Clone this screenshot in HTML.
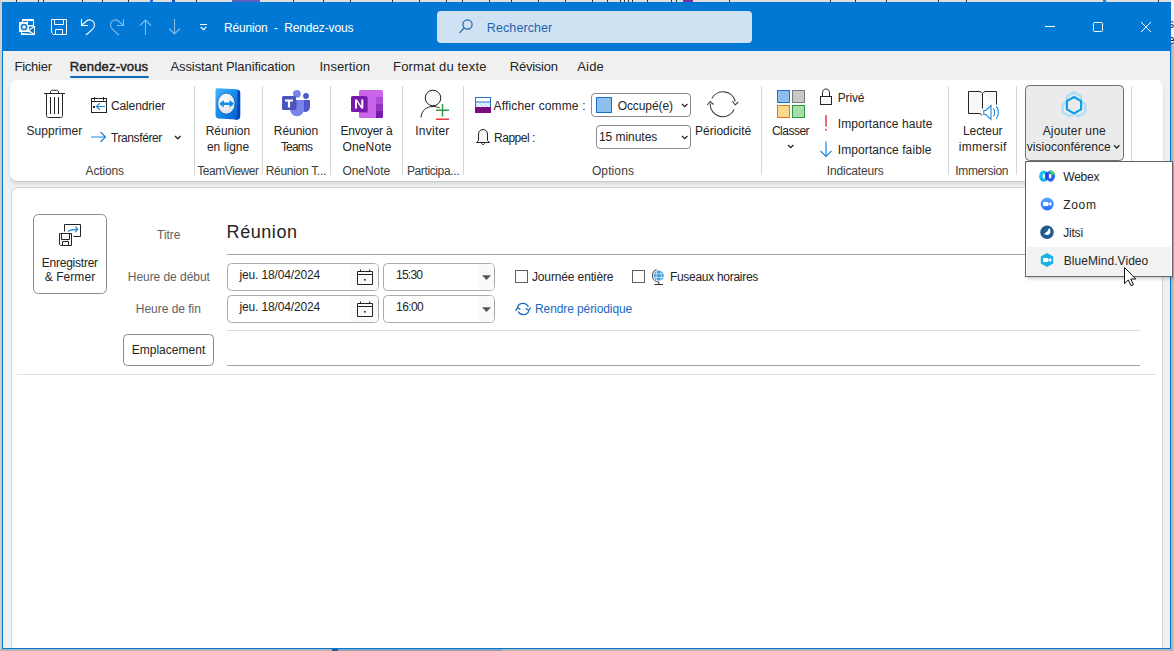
<!DOCTYPE html>
<html><head><meta charset="utf-8">
<style>
*{margin:0;padding:0;box-sizing:border-box}
html,body{width:1174px;height:651px;overflow:hidden;background:#c9c9c9;font-family:"Liberation Sans",sans-serif;color:#242424}
.a{position:absolute}
.t{position:absolute;white-space:nowrap;font-size:12px;line-height:14px}
svg.a{overflow:visible}
</style></head>
<body>
<div class="a" style="left:0;top:0;width:1174px;height:2px;background:#dedede"></div>
<div class="a" style="left:16px;top:0;width:1px;height:2px;background:#3a3a3a"></div><div class="a" style="left:38px;top:0;width:1px;height:2px;background:#3a3a3a"></div><div class="a" style="left:43px;top:0;width:1px;height:2px;background:#3a3a3a"></div><div class="a" style="left:82px;top:0;width:1px;height:2px;background:#3a3a3a"></div><div class="a" style="left:102px;top:0;width:1px;height:2px;background:#3a3a3a"></div><div class="a" style="left:128px;top:0;width:1px;height:2px;background:#3a3a3a"></div><div class="a" style="left:196px;top:0;width:1px;height:2px;background:#3a3a3a"></div><div class="a" style="left:293px;top:0;width:1px;height:2px;background:#3a3a3a"></div><div class="a" style="left:323px;top:0;width:1px;height:2px;background:#3a3a3a"></div><div class="a" style="left:350px;top:0;width:1px;height:2px;background:#3a3a3a"></div><div class="a" style="left:392px;top:0;width:1px;height:2px;background:#3a3a3a"></div><div class="a" style="left:419px;top:0;width:1px;height:2px;background:#3a3a3a"></div><div class="a" style="left:446px;top:0;width:1px;height:2px;background:#3a3a3a"></div><div class="a" style="left:462px;top:0;width:1px;height:2px;background:#3a3a3a"></div><div class="a" style="left:489px;top:0;width:1px;height:2px;background:#3a3a3a"></div><div class="a" style="left:511px;top:0;width:1px;height:2px;background:#3a3a3a"></div><div class="a" style="left:538px;top:0;width:1px;height:2px;background:#3a3a3a"></div><div class="a" style="left:565px;top:0;width:1px;height:2px;background:#3a3a3a"></div><div class="a" style="left:592px;top:0;width:1px;height:2px;background:#3a3a3a"></div><div class="a" style="left:607px;top:0;width:1px;height:2px;background:#3a3a3a"></div><div class="a" style="left:620px;top:0;width:1px;height:2px;background:#3a3a3a"></div><div class="a" style="left:624px;top:0;width:1px;height:2px;background:#3a3a3a"></div><div class="a" style="left:628px;top:0;width:1px;height:2px;background:#3a3a3a"></div><div class="a" style="left:632px;top:0;width:1px;height:2px;background:#3a3a3a"></div><div class="a" style="left:647px;top:0;width:1px;height:2px;background:#3a3a3a"></div><div class="a" style="left:671px;top:0;width:1px;height:2px;background:#3a3a3a"></div><div class="a" style="left:676px;top:0;width:1px;height:2px;background:#3a3a3a"></div><div class="a" style="left:729px;top:0;width:1px;height:2px;background:#3a3a3a"></div><div class="a" style="left:830px;top:0;width:1px;height:2px;background:#3a3a3a"></div><div class="a" style="left:855px;top:0;width:1px;height:2px;background:#3a3a3a"></div><div class="a" style="left:886px;top:0;width:1px;height:2px;background:#3a3a3a"></div><div class="a" style="left:938px;top:0;width:1px;height:2px;background:#3a3a3a"></div><div class="a" style="left:966px;top:0;width:1px;height:2px;background:#3a3a3a"></div><div class="a" style="left:1158px;top:0;width:1px;height:2px;background:#3a3a3a"></div><div class="a" style="left:232px;top:0;width:28px;height:2px;background:#5a5fc0"></div><div class="a" style="left:150px;top:0;width:3px;height:2px;background:#2a6fd0"></div><div class="a" style="left:172px;top:0;width:3px;height:2px;background:#1a50c0"></div><div class="a" style="left:683px;top:0;width:10px;height:2px;background:#8030a0"></div><div class="a" style="left:1103px;top:0;width:3px;height:2px;background:#3080e0"></div>
<div class="a" style="left:1171px;top:0;width:3px;height:651px;background:linear-gradient(90deg,#a9a9a9,#c6c6c6)"></div>
<div class="a" style="left:1171px;top:0;width:3px;height:44px;background:#f2f2f2"></div>
<div class="t" style="left:1168px;top:17px;font-size:12px;color:#222">s</div>
<div class="t" style="left:1168px;top:33px;font-size:12px;color:#222">e</div>
<div class="a" style="left:0;top:0;width:2px;height:651px;background:#cfcfcf"></div>
<div class="a" style="left:2px;top:2px;width:1169px;height:647px;background:#f0f0f0"></div>
<div class="a" style="left:2px;top:2px;width:1169px;height:49px;background:#0078d4"></div>
<!-- ribbon card -->
<div class="a" style="left:10px;top:80px;width:1153px;height:101px;background:#fff;border-radius:7px;box-shadow:0 1px 0 #cdcdcd,0 3px 4px rgba(0,0,0,0.09)"></div>
<!-- body card -->
<div class="a" style="left:11px;top:187px;width:1152px;height:462px;background:#fff;border:1px solid #d4d4d4;border-bottom:none;border-radius:7px 7px 0 0"></div>
<!-- window border -->
<div class="a" style="left:2px;top:2px;width:1169px;height:647px;border:1px solid #0078d4"></div>
<div class="a" style="left:0;top:649px;width:1174px;height:2px;background:#b4b4b4"></div>
<div class="a" style="left:338px;top:649px;width:164px;height:2px;background:#8ea3b8"></div>
<div class="a" style="left:332px;top:649px;width:6px;height:2px;background:#1f5fa0"></div>
<svg class="a" style="left:0;top:0" width="1174" height="651" viewBox="0 0 1174 651">
<!-- ===== title bar ===== -->
<g fill="#fff">
  <rect x="22" y="19" width="12" height="8"/>
  <rect x="21" y="26" width="14" height="9"/>
  <rect x="19" y="22" width="10" height="10"/>
</g>
<g fill="#0078d4">
  <rect x="23" y="21" width="4" height="1"/>
  <rect x="28" y="21" width="5" height="4"/>
  <path d="M22,33 V32 H28.5 L33,34 Z"/>
  <path d="M29,26.5 H33.5 L29,29.5 Z"/>
  <path d="M29.5,30.6 L34,27.6 V33.6 Z"/>
</g>
<circle cx="24" cy="27" r="2.6" fill="none" stroke="#0078d4" stroke-width="1.5"/>
<g fill="none" stroke="#fff" stroke-width="1">
  <path d="M51.5,19.5 H66.5 V34.5 H53.5 L51.5,32.5 Z M54.5,19.5 V24.5 H63.5 V19.5 M55.5,34.5 V29.5 H62.5 V34.5"/>
  <path d="M81.5,19 V25.5 H88 M82,25 L86.5,21 C89.5,18.5 94.5,20.5 94.5,25 C94.5,27 93.5,28.3 92.5,29.3 L86,35" stroke-width="1.1"/>
</g>
<g fill="none" stroke="#fff" stroke-opacity="0.5" stroke-width="1.1">
  <path d="M123.5,19 V25.5 H117 M123,25 L118.5,21 C115.5,18.5 110.5,20.5 110.5,25 C110.5,27 111.5,28.3 112.5,29.3 L119,35"/>
  <path d="M145.5,20 V35 M140,25.5 L145.5,20 L151,25.5"/>
  <path d="M174.5,19 V34 M169,28.5 L174.5,34 L180,28.5"/>
</g>
<g fill="none" stroke="#fff" stroke-width="1.2">
  <path d="M200,24.5 H207 M200.8,27 L203.5,29.7 L206.2,27"/>
</g>
<rect x="437" y="11" width="315" height="32" rx="4" fill="#cfe2f3"/>
<g fill="none" stroke="#1f62ad" stroke-width="1.2">
  <circle cx="467.5" cy="24.5" r="4.6"/>
  <path d="M464.3,27.8 L459.5,32.8"/>
</g>
<g fill="none" stroke="#fff" stroke-width="1">
  <path d="M1045,26.5 H1055"/>
  <rect x="1093.5" y="22.5" width="9" height="9" rx="1"/>
  <path d="M1141,22 L1151,32 M1151,22 L1141,32"/>
</g>
<!-- tab underline -->
<rect x="70" y="76" width="79" height="2" rx="1" fill="#0f6cbd"/>

<!-- ===== ribbon ===== -->
<!-- separators -->
<g fill="#d6d6d6">
  <rect x="194" y="86" width="1" height="89"/>
  <rect x="262" y="86" width="1" height="89"/>
  <rect x="330" y="86" width="1" height="89"/>
  <rect x="402" y="86" width="1" height="89"/>
  <rect x="463" y="86" width="1" height="89"/>
  <rect x="761" y="86" width="1" height="89"/>
  <rect x="948" y="86" width="1" height="89"/>
  <rect x="1016" y="86" width="1" height="89"/>
  <rect x="1131" y="86" width="1" height="89"/>
</g>
<!-- trash -->
<g fill="none" stroke="#242424" stroke-width="1">
  <path d="M44,93.5 H65 M50.5,93.5 V92 C50.5,90.8 51.5,90.3 52.5,90.3 H56.5 C57.5,90.3 58.5,90.8 58.5,92 V93.5"/>
  <path d="M46.5,94 V115.5 C46.5,117 47.5,117.5 48.5,117.5 H60.5 C61.5,117.5 62.5,117 62.5,115.5 V94"/>
  <path d="M50.5,97 V114 M54.5,97 V114 M58.5,97 V114"/>
</g>
<!-- calendar arrow -->
<g fill="none" stroke="#242424" stroke-width="1">
  <rect x="91.5" y="98.5" width="15" height="14"/>
  <path d="M91.5,101.5 H106.5 M94.5,97 V100.5 M103.5,97 V100.5"/>
</g>
<rect x="93" y="106" width="2" height="2" fill="#242424"/>
<g fill="none" stroke="#1e88d8" stroke-width="1.2">
  <path d="M96.5,106.5 H105 M99.8,103.3 L96.5,106.5 L99.8,109.7"/>
  <path d="M91,137 H105 M100.5,132 L105.5,137 L100.5,142"/>
</g>
<path d="M175,136 L177.8,138.8 L180.6,136" fill="none" stroke="#242424" stroke-width="1.3"/>
</svg>

<svg class="a" style="left:0;top:0" width="1174" height="651" viewBox="0 0 1174 651">
<defs>
  <linearGradient id="tvg" x1="0" y1="0" x2="1" y2="1">
    <stop offset="0" stop-color="#45b6fa"/><stop offset="0.55" stop-color="#0c86ea"/><stop offset="1" stop-color="#0456c8"/>
  </linearGradient>
  <radialGradient id="tvw" cx="0.45" cy="0.35" r="0.7">
    <stop offset="0" stop-color="#ffffff"/><stop offset="1" stop-color="#d9dde2"/>
  </radialGradient>
  <pattern id="hatch" width="3" height="3" patternUnits="userSpaceOnUse" patternTransform="rotate(-45)">
    <rect width="3" height="3" fill="#bfe0fa"/><rect width="1.2" height="3" fill="#ffffff"/>
  </pattern>
</defs>
<!-- TeamViewer -->
<path d="M217,88.3 L236,89.3 C238.5,89.5 240,90.8 240,93.3 L240,115.7 C240,118.2 238.5,119.7 236,119.5 L219,118.5 C216.5,118.3 215.5,116.7 215.5,114.2 L215.5,91.3 C215.5,89.1 216,88.2 217,88.3 Z" fill="url(#tvg)"/>
<path d="M238.5,89.8 C239.8,90.5 240.3,91.8 240.3,93.3 L240.3,115.7 C240.3,118.2 239,119.7 236.5,119.7 L234,119.6 C236.5,119.2 237.5,117.7 237.5,115.2 L237.5,92.3 C237.5,91.1 238,90.1 238.5,89.8 Z" fill="#0345b8"/>
<ellipse cx="226.3" cy="103.6" rx="8.7" ry="10.6" fill="url(#tvw)" stroke="#0a5cc0" stroke-width="0.8"/>
<path d="M219.3,103.8 L223.8,100 V102.6 H229.6 V100 L234.1,103.8 L229.6,107.6 V105 H223.8 V107.6 Z" fill="#0e8ee9"/>
<!-- Teams -->
<circle cx="296.9" cy="93.8" r="3.9" fill="#7b83eb"/>
<circle cx="306" cy="96" r="2.9" fill="#5059c9"/>
<path d="M302,100 H309 C309.6,100 310,100.4 310,101 V107 C310,109.8 307.8,112 305,112 C303.5,112 302.3,111.3 301.5,110.3 Z" fill="#5059c9"/>
<path d="M290,100 H303 C303.5,100 304,100.5 304,101 V109 C304,113 301,116.2 297,116.2 C293,116.2 290,113 290,109 Z" fill="#7b83eb"/>
<path d="M290,100 H297 V110 H290 Z" fill="#3a41a8" opacity="0.35"/>
<rect x="282" y="96" width="14" height="14" rx="1.5" fill="#4b53bc"/>
<path d="M285,99.5 H293 V101.5 H290.1 V107.5 H287.9 V101.5 H285 Z" fill="#fff"/>
<!-- OneNote -->
<rect x="359" y="90" width="24" height="28" rx="1.5" fill="#ca64ea"/>
<path d="M376,97 H383 V104 H376 Z" fill="#ae4bd5"/>
<path d="M376,104 H383 V111 H376 Z" fill="#9332bf"/>
<path d="M376,111 H383 V116.5 C383,117.3 382.3,118 381.5,118 H376 Z" fill="#7719aa"/>
<rect x="359" y="97" width="9" height="16" fill="#8a2ab8" opacity="0.5"/>
<rect x="351" y="96" width="16.4" height="16" rx="1.5" fill="#7719aa"/>
<path d="M355,99.5 H357 L361.3,106 V99.5 H363.3 V108.5 H361.3 L357,102 V108.5 H355 Z" fill="#fff"/>
<!-- Invite -->
<g fill="none" stroke="#242424" stroke-width="1">
  <circle cx="433" cy="98" r="7.8" fill="#f8f8f8"/>
  <path d="M421,117.5 C421.5,110.5 426.5,106.5 433,106.5 C435.5,106.5 437.8,107.1 439.7,108"/>
</g>
<g fill="none" stroke-width="1.5">
  <path d="M436,110.3 H449 M442.5,104 V116.5" stroke="#2e9c44"/>
  <path d="M436,119.2 H449" stroke="#e03a3a"/>
</g>
<!-- Show as -->
<rect x="475.5" y="97.5" width="15" height="15" fill="#fff" stroke="#2a72c8" stroke-width="1"/>
<rect x="476" y="102.5" width="14" height="4.5" fill="url(#hatch)"/>
<path d="M475.5,102 H490.5" stroke="#2a72c8" stroke-width="1"/>
<rect x="475" y="107" width="16" height="6" fill="#7b0c7f"/>
<!-- Bell -->
<path d="M478.5,140.5 V134 C478.5,131.3 480.5,129.5 483,129.5 C485.5,129.5 487.5,131.3 487.5,134 V140.5 L489.5,142.5 H476.5 Z" fill="#f8f8f8" stroke="#242424" stroke-width="1"/>
<path d="M481.5,142.8 C481.5,143.8 482.2,144.6 483,144.6 C483.8,144.6 484.5,143.8 484.5,142.8" fill="none" stroke="#242424" stroke-width="1"/>
<!-- dropdown boxes -->
<rect x="591.5" y="93.5" width="99" height="23" rx="3.5" fill="#fff" stroke="#8a8a8a" stroke-width="1"/>
<rect x="596.5" y="97.5" width="15" height="15" fill="#8cc0ef" stroke="#1c6fce" stroke-width="1"/>
<rect x="596.5" y="125.5" width="94" height="23" rx="3.5" fill="#fff" stroke="#8a8a8a" stroke-width="1"/>
<g fill="none" stroke="#242424" stroke-width="1.3">
  <path d="M682,104 L684.7,106.7 L687.4,104"/>
  <path d="M682,136 L684.7,138.7 L687.4,136"/>
</g>
<!-- Recurrence -->
<g fill="none" stroke="#424242" stroke-width="1.1">
  <path d="M711.8,98.5 A12.6,12.6 0 0 1 735.2,101.5"/>
  <path d="M734.2,109.5 A12.6,12.6 0 0 1 710.2,103.5"/>
  <path d="M707.2,105 L710.2,101.5 L713.5,104.5"/>
  <path d="M732.3,101 L735.2,105 L738.2,102"/>
</g>
<!-- Categorize -->
<rect x="777.5" y="90.5" width="12" height="12" fill="#8cbfee" stroke="#1f6fcf"/>
<rect x="792.5" y="90.5" width="12" height="12" fill="#c9c9c9" stroke="#7a7a7a"/>
<rect x="777.5" y="105.5" width="12" height="12" fill="#f8d98e" stroke="#e07a10"/>
<rect x="792.5" y="105.5" width="12" height="12" fill="#a9dcab" stroke="#2a9a3a"/>
<path d="M788,145 L790.7,147.7 L793.4,145" fill="none" stroke="#242424" stroke-width="1.3"/>
<!-- Lock -->
<g fill="none" stroke="#242424" stroke-width="1">
  <path d="M822.5,96.5 V93 C822.5,90.5 824,89 826,89 C828,89 829.5,90.5 829.5,93 V96.5"/>
  <rect x="820.5" y="96.5" width="11" height="8" fill="#f8f8f8"/>
</g>
<!-- exclamation -->
<rect x="825.2" y="115" width="1.6" height="11.5" fill="#e8474f"/>
<rect x="825.2" y="128.7" width="1.6" height="2" fill="#e8474f"/>
<!-- arrow down -->
<g fill="none" stroke="#1e88d8" stroke-width="1.2">
  <path d="M826,141.5 V156.5 M820.5,151 L826,156.5 L831.5,151"/>
</g>
<!-- Immersive reader -->
<path d="M982.5,93.5 C981.5,92 980.3,91.5 979,91.5 H968.5 V113.5 H979 C980.5,113.5 981.5,114.5 982,115.5 M982.5,93.5 C983.5,92 984.7,91.5 986,91.5 H996.5 V104.7 M982.5,93.5 V108.5" fill="#f8f8f8" stroke="#242424" stroke-width="1"/>
<g fill="#fff" stroke="#1e88d8" stroke-width="1.1">
  <path d="M983.8,110.5 H985.8 L991,105.6 V119.3 L985.8,114.5 H983.8 Z"/>
</g>
<g fill="none" stroke="#1e88d8" stroke-width="1.1">
  <path d="M993.4,108.3 C995,110.5 995,114.5 993.4,116.5"/>
  <path d="M996.3,106.2 C999,109.5 999,115.5 996.3,118.8"/>
</g>
<!-- Ajouter visio button -->
<rect x="1025.5" y="85.5" width="98" height="75" rx="4" fill="#ebebeb" stroke="#707070" stroke-width="1"/>
<g fill="none" stroke="#b3dff6" stroke-width="2.5" stroke-linejoin="miter">
  <path d="M1074.00,92.30 L1080.93,96.30 L1080.93,104.30 L1074.00,108.30 L1067.07,104.30 L1067.07,96.30 Z"/>
  <path d="M1069.60,100.30 L1076.53,104.30 L1076.53,112.30 L1069.60,116.30 L1062.67,112.30 L1062.67,104.30 Z"/>
  <path d="M1078.40,100.30 L1085.33,104.30 L1085.33,112.30 L1078.40,116.30 L1071.47,112.30 L1071.47,104.30 Z"/>
</g>
<path d="M1074.00,97.00 L1081.10,101.10 L1081.10,109.30 L1074.00,113.40 L1066.90,109.30 L1066.90,101.10 Z" fill="#ebebeb" stroke="#0a9fe9" stroke-width="2.1"/>
<path d="M1114,145.3 L1116.7,148 L1119.4,145.3" fill="none" stroke="#242424" stroke-width="1.3"/>
</svg>

<svg class="a" style="left:0;top:0" width="1174" height="651" viewBox="0 0 1174 651">
<!-- Enregistrer & Fermer -->
<rect x="33.5" y="214.5" width="73" height="79" rx="5" fill="#fff" stroke="#8a8a8a" stroke-width="1"/>
<g fill="none" stroke="#242424" stroke-width="1">
  <path d="M64.5,231.5 V224.5 H80.5 V236.5 H73.5"/>
  <path d="M59.5,233.5 H71.5 V245.5 H60.5 L59.5,244.5 Z" fill="#f8f8f8"/>
  <path d="M61.5,233.5 V239.5 H69.5 V233.5 M62.5,245.5 V241.5 H68.5 V245.5"/>
</g>
<g fill="none" stroke="#1e88d8" stroke-width="1.2" stroke-linecap="round">
  <path d="M68.3,231.2 C70.5,229.3 72.5,229.3 77.5,229.3 M75.5,226.8 L77.8,229.3 L75.5,231.8"/>
</g>
<!-- title underline -->
<rect x="227" y="254" width="914" height="1" fill="#a3a3a3"/>
<!-- date boxes -->
<g stroke="#ababab" stroke-width="1">
  <rect x="227.5" y="263.5" width="151" height="27" rx="4" fill="#fff"/>
  <rect x="383.5" y="263.5" width="111" height="27" rx="4" fill="#fff"/>
  <rect x="227.5" y="295.5" width="151" height="27" rx="4" fill="#fff"/>
  <rect x="383.5" y="295.5" width="111" height="27" rx="4" fill="#fff"/>
</g>
<g fill="#fafafa">
  <path d="M351,264 H375 C376.8,264 378,265.2 378,267 V287 C378,288.8 376.8,290 375,290 H351 Z"/>
  <path d="M351,296 H375 C376.8,296 378,297.2 378,299 V319 C378,320.8 376.8,322 375,322 H351 Z"/>
  <path d="M478,264 H491 C492.8,264 494,265.2 494,267 V287 C494,288.8 492.8,290 491,290 H478 Z"/>
  <path d="M478,296 H491 C492.8,296 494,297.2 494,299 V319 C494,320.8 492.8,322 491,322 H478 Z"/>
</g>
<g fill="none" stroke="#242424" stroke-width="1">
  <path d="M357.5,271.5 H372.5 V284.5 H357.5 Z M357.5,274.5 H372.5 M360.5,269.5 V272 M369.5,269.5 V272"/>
  <path d="M357.5,303.5 H372.5 V316.5 H357.5 Z M357.5,306.5 H372.5 M360.5,301.5 V304 M369.5,301.5 V304"/>
</g>
<rect x="364" y="279" width="1.6" height="1.6" fill="#242424"/>
<rect x="364" y="311" width="1.6" height="1.6" fill="#242424"/>
<path d="M482,275.3 H491 L486.5,279.9 Z M482,307.3 H491 L486.5,311.9 Z" fill="#555"/>
<!-- checkboxes -->
<rect x="515.5" y="270.5" width="12" height="12" fill="#fff" stroke="#5f5f5f" stroke-width="1"/>
<rect x="632.5" y="270.5" width="12" height="12" fill="#fff" stroke="#5f5f5f" stroke-width="1"/>
<!-- globe -->
<circle cx="658.8" cy="275.6" r="5" fill="#3f9ae0"/>
<g fill="none" stroke="#d8ecfb" stroke-width="0.8">
  <path d="M654,273.8 H663.6 M654,277.4 H663.6 M657,271 C656,273.5 656,277.7 657,280.3 M660.6,271 C661.6,273.5 661.6,277.7 660.6,280.3"/>
</g>
<g fill="none" stroke="#333" stroke-width="1">
  <path d="M656.5,269.5 C653.2,270.5 652.5,273.5 652.5,275.8 C652.5,279.5 655.5,282 658.8,282 M658.8,282 V284 M654.5,284.5 H663"/>
</g>
<!-- recurrence blue -->
<g fill="none" stroke="#1769c1" stroke-width="1.3">
  <path d="M517.5,307 A5.8,5.8 0 0 1 528.3,307"/>
  <path d="M528.8,311 A5.8,5.8 0 0 1 518.2,311.5"/>
  <path d="M515.6,310.6 L517.5,307.6 L520.4,309.5"/>
  <path d="M525.8,308.2 L528.6,310.4 L530.8,307.6"/>
</g>
<!-- lines -->
<rect x="227" y="330" width="913" height="1" fill="#dcdcdc"/>
<rect x="227" y="365" width="913" height="1" fill="#a3a3a3"/>
<rect x="17" y="374" width="1139" height="1" fill="#e0e0e0"/>
<!-- Emplacement -->
<rect x="123.5" y="334.5" width="90" height="31" rx="4" fill="#fff" stroke="#8a8a8a" stroke-width="1"/>
</svg>

<div class='t' style='left:223.88px;top:20.74px;font-size:12px;line-height:14px;color:#fff;letter-spacing:-0.143px;'>Réunion&nbsp; - &nbsp;Rendez-vous</div>
<div class='t' style='left:486.85px;top:20.77px;font-size:12.5px;line-height:15px;color:#1f62ad;letter-spacing:0.092px;'>Rechercher</div>
<div class='t' style='left:14.52px;top:58.80px;font-size:13px;line-height:16px;color:#242424;letter-spacing:-0.253px;'>Fichier</div>
<div class='t' style='left:69.82px;top:58.80px;font-size:13px;line-height:16px;color:#242424;letter-spacing:0.169px;-webkit-text-stroke:0.45px #242424'>Rendez-vous</div>
<div class='t' style='left:170.42px;top:58.80px;font-size:13px;line-height:16px;color:#242424;letter-spacing:-0.080px;'>Assistant Planification</div>
<div class='t' style='left:319.42px;top:58.80px;font-size:13px;line-height:16px;color:#242424;letter-spacing:0.091px;'>Insertion</div>
<div class='t' style='left:393.12px;top:58.80px;font-size:13px;line-height:16px;color:#242424;letter-spacing:0.161px;'>Format du texte</div>
<div class='t' style='left:509.72px;top:58.80px;font-size:13px;line-height:16px;color:#242424;letter-spacing:-0.223px;'>Révision</div>
<div class='t' style='left:577.22px;top:58.80px;font-size:13px;line-height:16px;color:#242424;letter-spacing:0.190px;'>Aide</div>
<div class='t' style='left:26.48px;top:123.54px;font-size:12px;line-height:14px;color:#242424;letter-spacing:0.043px;'>Supprimer</div>
<div class='t' style='left:110.98px;top:98.74px;font-size:12px;line-height:14px;color:#242424;letter-spacing:-0.129px;'>Calendrier</div>
<div class='t' style='left:110.98px;top:130.54px;font-size:12px;line-height:14px;color:#242424;letter-spacing:-0.401px;'>Transférer</div>
<div class='t' style='left:205.68px;top:124.04px;font-size:12px;line-height:14px;color:#242424;letter-spacing:-0.051px;'>Réunion</div>
<div class='t' style='left:206.88px;top:139.84px;font-size:12px;line-height:14px;color:#242424;letter-spacing:0.050px;'>en ligne</div>
<div class='t' style='left:273.78px;top:124.04px;font-size:12px;line-height:14px;color:#242424;letter-spacing:-0.051px;'>Réunion</div>
<div class='t' style='left:280.88px;top:139.84px;font-size:12px;line-height:14px;color:#242424;letter-spacing:-0.786px;'>Teams</div>
<div class='t' style='left:340.58px;top:124.04px;font-size:12px;line-height:14px;color:#242424;letter-spacing:-0.254px;'>Envoyer à</div>
<div class='t' style='left:342.48px;top:139.84px;font-size:12px;line-height:14px;color:#242424;letter-spacing:0.145px;'>OneNote</div>
<div class='t' style='left:415.28px;top:124.04px;font-size:12px;line-height:14px;color:#242424;letter-spacing:0.235px;'>Inviter</div>
<div class='t' style='left:493.58px;top:98.64px;font-size:12px;line-height:14px;color:#242424;letter-spacing:0.139px;'>Afficher comme :</div>
<div class='t' style='left:493.98px;top:131.14px;font-size:12px;line-height:14px;color:#242424;letter-spacing:-0.458px;'>Rappel :</div>
<div class='t' style='left:617.68px;top:99.34px;font-size:12px;line-height:14px;color:#242424;letter-spacing:-0.091px;'>Occupé(e)</div>
<div class='t' style='left:598.98px;top:129.94px;font-size:12px;line-height:14px;color:#242424;letter-spacing:-0.045px;'>15 minutes</div>
<div class='t' style='left:694.98px;top:123.54px;font-size:12px;line-height:14px;color:#242424;letter-spacing:0.027px;'>Périodicité</div>
<div class='t' style='left:771.88px;top:123.64px;font-size:12px;line-height:14px;color:#242424;letter-spacing:-0.498px;'>Classer</div>
<div class='t' style='left:837.78px;top:90.74px;font-size:12px;line-height:14px;color:#242424;letter-spacing:-0.161px;'>Privé</div>
<div class='t' style='left:837.78px;top:116.84px;font-size:12px;line-height:14px;color:#242424;letter-spacing:0.080px;'>Importance haute</div>
<div class='t' style='left:837.78px;top:142.64px;font-size:12px;line-height:14px;color:#242424;letter-spacing:0.096px;'>Importance faible</div>
<div class='t' style='left:962.98px;top:123.94px;font-size:12px;line-height:14px;color:#242424;letter-spacing:-0.089px;'>Lecteur</div>
<div class='t' style='left:958.78px;top:140.14px;font-size:12px;line-height:14px;color:#242424;letter-spacing:0.310px;'>immersif</div>
<div class='t' style='left:1042.68px;top:123.84px;font-size:12px;line-height:14px;color:#242424;letter-spacing:0.161px;'>Ajouter une</div>
<div class='t' style='left:1026.68px;top:140.14px;font-size:12px;line-height:14px;color:#242424;letter-spacing:0.044px;'>visioconférence</div>
<div class='t' style='left:85.58px;top:163.54px;font-size:12px;line-height:14px;color:#3d3d3d;letter-spacing:-0.160px;'>Actions</div>
<div class='t' style='left:197.28px;top:163.54px;font-size:12px;line-height:14px;color:#3d3d3d;letter-spacing:-0.446px;'>TeamViewer</div>
<div class='t' style='left:265.68px;top:163.54px;font-size:12px;line-height:14px;color:#3d3d3d;letter-spacing:-0.293px;'>Réunion T...</div>
<div class='t' style='left:342.48px;top:163.54px;font-size:12px;line-height:14px;color:#3d3d3d;letter-spacing:-0.055px;'>OneNote</div>
<div class='t' style='left:406.88px;top:163.54px;font-size:12px;line-height:14px;color:#3d3d3d;letter-spacing:-0.373px;'>Participa...</div>
<div class='t' style='left:591.88px;top:163.54px;font-size:12px;line-height:14px;color:#3d3d3d;letter-spacing:0.123px;'>Options</div>
<div class='t' style='left:826.78px;top:163.54px;font-size:12px;line-height:14px;color:#3d3d3d;letter-spacing:-0.160px;'>Indicateurs</div>
<div class='t' style='left:955.28px;top:163.54px;font-size:12px;line-height:14px;color:#3d3d3d;letter-spacing:-0.352px;'>Immersion</div>
<div class='t' style='left:157.08px;top:228.04px;font-size:12px;line-height:14px;color:#616161;letter-spacing:-0.041px;'>Titre</div>
<div class='t' style='left:226.62px;top:220.76px;font-size:18px;line-height:22px;color:#242424;letter-spacing:0.556px;'>Réunion</div>
<div class='t' style='left:127.78px;top:269.94px;font-size:12px;line-height:14px;color:#616161;letter-spacing:-0.049px;'>Heure de début</div>
<div class='t' style='left:135.78px;top:301.84px;font-size:12px;line-height:14px;color:#616161;letter-spacing:-0.025px;'>Heure de fin</div>
<div class='t' style='left:239.38px;top:267.84px;font-size:12px;line-height:14px;color:#242424;letter-spacing:-0.132px;'>jeu. 18/04/2024</div>
<div class='t' style='left:239.38px;top:299.84px;font-size:12px;line-height:14px;color:#242424;letter-spacing:-0.132px;'>jeu. 18/04/2024</div>
<div class='t' style='left:396.08px;top:267.84px;font-size:12px;line-height:14px;color:#242424;letter-spacing:-0.783px;'>15:30</div>
<div class='t' style='left:396.08px;top:299.84px;font-size:12px;line-height:14px;color:#242424;letter-spacing:-0.583px;'>16:00</div>
<div class='t' style='left:531.98px;top:269.84px;font-size:12px;line-height:14px;color:#242424;letter-spacing:-0.135px;'>Journée entière</div>
<div class='t' style='left:669.88px;top:269.54px;font-size:12px;line-height:14px;color:#242424;letter-spacing:-0.288px;'>Fuseaux horaires</div>
<div class='t' style='left:534.98px;top:301.54px;font-size:12px;line-height:14px;color:#1769c1;letter-spacing:-0.091px;'>Rendre périodique</div>
<div class='t' style='left:131.68px;top:342.84px;font-size:12px;line-height:14px;color:#242424;letter-spacing:0.023px;'>Emplacement</div>
<div class='t' style='left:41.78px;top:255.84px;font-size:12px;line-height:14px;color:#242424;letter-spacing:-0.239px;'>Enregistrer</div>
<div class='t' style='left:44.68px;top:270.34px;font-size:12px;line-height:14px;color:#242424;letter-spacing:0.069px;'>&amp; Fermer</div>
<div class="a" style="left:1025px;top:161px;width:148px;height:116px;background:#fff;border:1px solid #646464;box-shadow:2px 2px 3px rgba(0,0,0,0.18)"></div>
<svg class="a" style="left:0;top:0" width="1174" height="651" viewBox="0 0 1174 651">
<rect x="1027" y="247" width="144" height="28.5" fill="#f2f2f2"/>
<!-- webex -->
<defs>
 <linearGradient id="wx1" x1="0" y1="0" x2="0" y2="1"><stop offset="0" stop-color="#14c8f0"/><stop offset="1" stop-color="#16b9e8"/></linearGradient>
 <linearGradient id="wx2" x1="0" y1="0" x2="1" y2="1"><stop offset="0" stop-color="#2a4fe6"/><stop offset="0.5" stop-color="#2c6ff2"/><stop offset="1" stop-color="#1a3fd8"/></linearGradient>
 <linearGradient id="zm" x1="0" y1="0" x2="0" y2="1"><stop offset="0" stop-color="#58a8ff"/><stop offset="1" stop-color="#2d6bff"/></linearGradient>
</defs>
<ellipse cx="1043.6" cy="176.1" rx="4.4" ry="5.6" fill="#18c3ef"/>
<ellipse cx="1050.6" cy="176.1" rx="4.4" ry="5.6" fill="#2a5ff0"/>
<path d="M1046.6,171.2 C1047.5,172.5 1048,174 1048,176.1 C1048,178.2 1047.5,179.7 1046.6,181 C1045.7,179.7 1045.2,178.2 1045.2,176.1 C1045.2,174 1045.7,172.5 1046.6,171.2 Z" fill="#1b44d6"/>
<path d="M1049.5,170.6 C1052,170.4 1054.2,171.8 1054.9,174.2 L1052.2,175.2 C1051.8,173.5 1050.8,172.6 1049.3,172.4 Z" fill="#3ecf63"/>
<path d="M1039.3,176 C1039.3,179 1041,181.6 1043.5,181.6 C1045,181.6 1046,181 1046.6,180.2 L1045.5,178.8 C1045,179.4 1044.3,179.8 1043.5,179.8 Z" fill="#14b0e0" opacity="0.8"/>
<rect x="1042.8" y="174" width="2.1" height="4.3" rx="0.6" fill="#fff"/>
<rect x="1049.1" y="174" width="2.1" height="4.3" rx="0.6" fill="#fff"/>
<!-- zoom -->
<circle cx="1047.2" cy="204" r="6.5" fill="url(#zm)"/>
<rect x="1043" y="202" width="5.3" height="3.9" rx="0.6" fill="#fff"/>
<path d="M1048.4,203.4 L1051.3,201.9 V206 L1048.4,204.5 Z" fill="#fff"/>
<!-- jitsi -->
<circle cx="1047" cy="232.2" r="6.7" fill="#1f5a8f"/>
<path d="M1049.8,228.3 C1048.3,228.6 1047.6,229.8 1047.7,231.2 C1046.2,231.6 1044.9,232.8 1043.9,234.8 C1045,234.3 1045.8,234.4 1046.6,234.9 C1048.4,235.3 1050.2,234 1050.4,232.2 C1050.6,230.8 1050.2,229.4 1049.8,228.3 Z" fill="#fff"/>
<!-- bluemind -->
<path d="M1047,252.9 L1053.2,256.4 V263.4 L1047,266.9 L1040.8,263.4 V256.4 Z" fill="#19b2e6"/>
<rect x="1043" y="258" width="5.3" height="4" rx="0.6" fill="#fff"/>
<path d="M1048.4,259.5 L1051.2,258 V262 L1048.4,260.6 Z" fill="#fff"/>
<!-- cursor -->
<path d="M1124.5,267.5 V283.6 L1128.3,280 L1131,285.8 L1133.5,284.7 L1130.8,279 L1135.8,279 Z" fill="#fff" stroke="#111" stroke-width="1" stroke-linejoin="round"/>
</svg>

<div class='t' style='left:1063.28px;top:170.24px;font-size:12px;line-height:14px;color:#242424;letter-spacing:-0.235px;'>Webex</div>
<div class='t' style='left:1063.28px;top:198.24px;font-size:12px;line-height:14px;color:#242424;letter-spacing:0.671px;'>Zoom</div>
<div class='t' style='left:1063.28px;top:225.94px;font-size:12px;line-height:14px;color:#242424;letter-spacing:-0.218px;'>Jitsi</div>
<div class='t' style='left:1063.78px;top:254.44px;font-size:12px;line-height:14px;color:#242424;letter-spacing:0.050px;'>BlueMind.Video</div>
</body></html>
